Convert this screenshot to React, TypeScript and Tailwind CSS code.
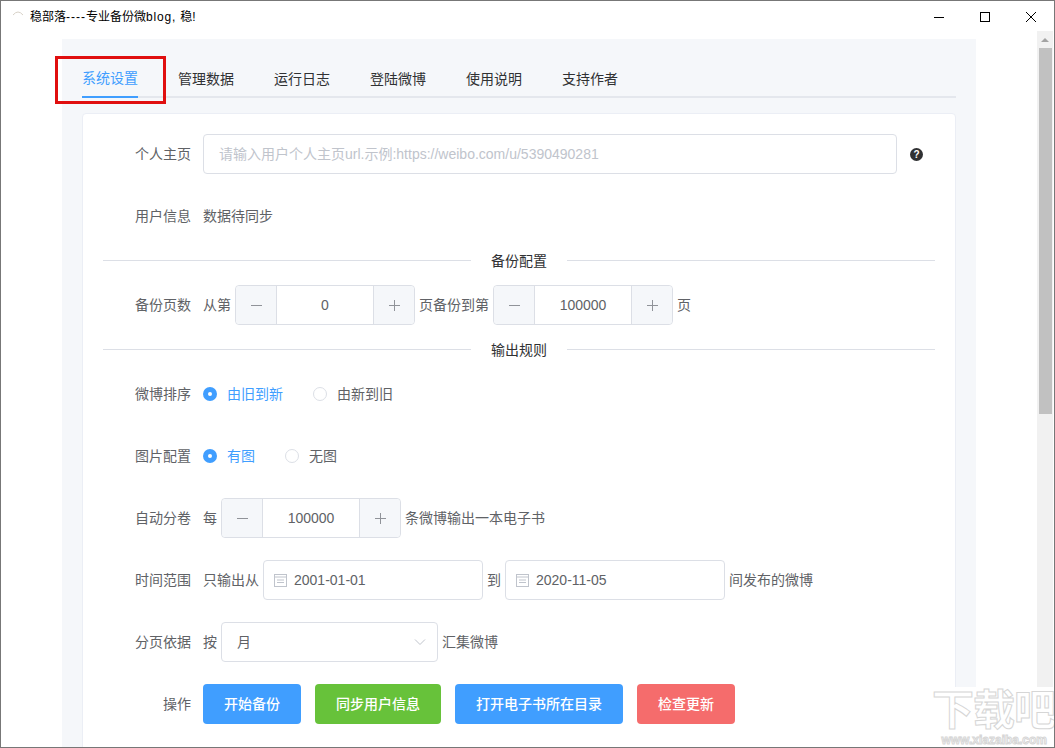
const FONT = "font-['Liberation_Sans','Noto_Sans_CJK_SC',sans-serif]";

const Label = ({ text }: { text: string }) => (
  <label className="w-[100px] shrink-0 pr-3 text-right text-sm text-[#606266]">{text}</label>
);

const Stepper = ({ value }: { value: string }) => (
  <div className="mx-1 flex h-10 w-[180px] shrink-0 rounded border border-[#dcdfe6] text-[#606266]">
    <span className="flex w-[41px] items-center justify-center rounded-l bg-[#f5f7fa] border-r border-[#dcdfe6]">
      <span className="h-px w-[11px] bg-[#909399]" />
    </span>
    <span className="flex flex-1 items-center justify-center text-sm">{value}</span>
    <span className="relative flex w-[41px] items-center justify-center rounded-r bg-[#f5f7fa] border-l border-[#dcdfe6]">
      <span className="h-px w-[11px] bg-[#909399]" />
      <span className="absolute h-[11px] w-px bg-[#909399]" />
    </span>
  </div>
);

const Radio = ({ text, on, className }: { text: string; on?: boolean; className?: string }) => (
  <span className={`flex items-center text-sm ${on ? "text-[#409eff]" : "text-[#606266]"} ${className ?? ""}`}>
    {on ? (
      <span className="mr-[10px] flex h-[14px] w-[14px] items-center justify-center rounded-full bg-[#409eff]">
        <span className="h-1 w-1 rounded-full bg-white" />
      </span>
    ) : (
      <span className="mr-[10px] h-[14px] w-[14px] rounded-full border border-[#dcdfe6] bg-white" />
    )}
    {text}
  </span>
);

const DateBox = ({ value }: { value: string }) => (
  <div className="mx-1 flex h-10 w-[220px] shrink-0 items-center rounded border border-[#dcdfe6] pl-[10px] text-sm text-[#606266]">
    <svg width="13" height="13" viewBox="0 0 13 13" fill="none" stroke="#c0c4cc" className="mr-[7px]">
      <rect x="0.5" y="0.5" width="12" height="12" />
      <path d="M0.5 3h12M3 6h7M3 8.5h7" />
    </svg>
    {value}
  </div>
);

const Divider = ({ text, className }: { text: string; className?: string }) => (
  <div className={`relative flex h-px items-center justify-center bg-[#dcdfe6] ${className ?? ""}`}>
    <span className="bg-white px-5 text-sm text-[#303133]">{text}</span>
  </div>
);

const Btn = ({ text, color }: { text: string; color: string }) => (
  <button className={`flex h-10 items-center rounded px-[21px] text-sm font-medium text-white ${color}`}>{text}</button>
);

const tabs = ["系统设置", "管理数据", "运行日志", "登陆微博", "使用说明", "支持作者"];

export default function App() {
  return (
    <div className={`${FONT} relative flex h-[748px] w-[1055px] flex-col overflow-hidden border border-[#777] bg-white`}>
      {/* title bar */}
      <div className="flex h-[38px] shrink-0 items-center">
        <svg width="14" height="10" viewBox="0 0 14 10" className="ml-[10px] -mt-3" fill="none" stroke="#d8d2c8">
          <path d="M2 6Q7 0 12 6" />
        </svg>
        <span className="ml-[5px] -mt-[7px] text-xs text-black">
          稳部落<span className="tracking-[1px]">----</span>专业备份微<span className="tracking-[0.8px]">blog, </span>稳!
        </span>
        <div className="ml-auto flex -mt-[7px] items-center">
          <svg width="12" height="12" viewBox="0 0 12 12" stroke="#000" className="mr-[34px]"><path d="M1 6.5h10" /></svg>
          <svg width="12" height="12" viewBox="0 0 12 12" stroke="#000" fill="none" className="mr-[34px]"><rect x="1.5" y="1.5" width="9" height="9" /></svg>
          <svg width="12" height="12" viewBox="0 0 12 12" stroke="#000" className="mr-[17px]"><path d="M1 1l10 10M11 1L1 11" /></svg>
        </div>
      </div>

      <div className="flex min-h-0 flex-1">
        <div className="ml-[61px] w-[914px] bg-[#f5f7fa] px-5 pt-5">
          {/* tabs */}
          <div className="flex h-[39px] gap-10 border-b-2 border-[#e4e7ed] text-sm text-[#303133]">
            {tabs.map((t, i) => (
              <span key={t} className={i === 0 ? "-mb-0.5 flex h-[39px] items-center border-b-2 border-[#409eff] text-[#409eff]" : "flex h-[39px] items-center"}>
                {t}
              </span>
            ))}
          </div>

          {/* card */}
          <div className="mt-[15px] h-[700px] rounded border border-[#ebeef5] bg-white pl-5 pr-5 pt-5">
            <div className="flex h-10 items-center">
              <Label text="个人主页" />
              <div className="flex h-10 w-[694px] items-center rounded border border-[#dcdfe6] px-[15px] text-sm text-[#c0c4cc]">
                请输入用户个人主页url.示例:https://weibo.com/u/5390490281
              </div>
              <span className="ml-[13px] flex h-[13px] w-[13px] items-center justify-center rounded-full bg-[#303133] text-[10px] font-bold text-white">?</span>
            </div>

            <div className="mt-[22px] flex h-10 items-center">
              <Label text="用户信息" />
              <span className="text-sm text-[#606266]">数据待同步</span>
            </div>

            <Divider text="备份配置" className="mt-[24px]" />

            <div className="mt-[24px] flex h-10 items-center text-sm text-[#606266]">
              <Label text="备份页数" />
              <span>从第</span>
              <Stepper value="0" />
              <span>页备份到第</span>
              <Stepper value="100000" />
              <span>页</span>
            </div>

            <Divider text="输出规则" className="mt-[24px]" />

            <div className="mt-[24px] flex h-10 items-center">
              <Label text="微博排序" />
              <Radio text="由旧到新" on />
              <Radio text="由新到旧" className="ml-[30px]" />
            </div>

            <div className="mt-[22px] flex h-10 items-center">
              <Label text="图片配置" />
              <Radio text="有图" on />
              <Radio text="无图" className="ml-[30px]" />
            </div>

            <div className="mt-[22px] flex h-10 items-center text-sm text-[#606266]">
              <Label text="自动分卷" />
              <span>每</span>
              <Stepper value="100000" />
              <span>条微博输出一本电子书</span>
            </div>

            <div className="mt-[22px] flex h-10 items-center text-sm text-[#606266]">
              <Label text="时间范围" />
              <span>只输出从</span>
              <DateBox value="2001-01-01" />
              <span>到</span>
              <DateBox value="2020-11-05" />
              <span>间发布的微博</span>
            </div>

            <div className="mt-[22px] flex h-10 items-center text-sm text-[#606266]">
              <Label text="分页依据" />
              <span>按</span>
              <div className="mx-1 flex h-10 w-[217px] items-center justify-between rounded border border-[#dcdfe6] px-[15px]">
                月
                <svg width="12" height="8" viewBox="0 0 12 8" fill="none" stroke="#c0c4cc" className="-mr-[4px]"><path d="M1 1.5l5 5 5-5" /></svg>
              </div>
              <span>汇集微博</span>
            </div>

            <div className="mt-[22px] flex h-10 items-center">
              <Label text="操作" />
              <div className="flex gap-[14px]">
                <Btn text="开始备份" color="bg-[#409eff]" />
                <Btn text="同步用户信息" color="bg-[#67c23a]" />
                <Btn text="打开电子书所在目录" color="bg-[#409eff]" />
                <Btn text="检查更新" color="bg-[#f56c6c]" />
              </div>
            </div>
          </div>
        </div>

        {/* scrollbar */}
        <div className="ml-auto mr-[1px] -mt-2 flex w-4 flex-col items-center bg-[#f1f1f1]">
          <span className="mt-[7px] h-0 w-0 border-x-4 border-b-4 border-x-transparent border-b-[#a3a3a3]" />
          <span className="mt-[6px] h-[366px] w-[13px] bg-[#c1c1c1]" />
        </div>
      </div>

      {/* red highlight drawn on the screenshot */}
      <div className="absolute left-[54px] top-[55px] h-[48px] w-[111px] border-[3px] border-[#e00f0f]" />

      {/* download site watermark */}
      <div className="absolute -bottom-px -right-px flex h-[61px] w-[137px] flex-col items-end bg-white font-bold text-white [-webkit-text-stroke:1px_#d6d6d6]">
        <span className="mt-[1px] text-[42px] leading-[46px] tracking-[-1px]">下载吧</span>
        <span className="pr-[8px] text-[12px] leading-[12px]">www.xiazaiba.com</span>
      </div>
    </div>
  );
}
